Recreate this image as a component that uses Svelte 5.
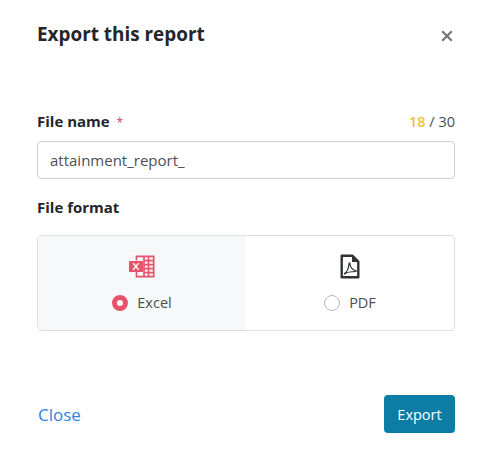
<script>
  let fileName = $state("attainment_report_");
  let format = $state("excel");
</script>

<div class="modal">
  <header>
    <h2>Export this report</h2>
    <button class="x" aria-label="Close">
      <svg width="12" height="12" viewBox="0 0 12 12"><path d="M1.200 1.200 10.800 10.800M10.800 1.200 1.200 10.800" stroke="#757575" stroke-width="2.200" fill="none"/></svg>
    </button>
  </header>

  <div class="label-row">
    <label for="fname">File name <span class="req">*</span></label>
    <span class="count"><span class="used">18</span> / 30</span>
  </div>
  <input id="fname" bind:value={fileName} />

  <div class="format-label">File format</div>
  <div class="formats">
    <button class="opt" class:active={format === "excel"} onclick={() => format = "excel"}>
      <svg class="icon" width="26" height="25" viewBox="0 0 26 25">
        <g transform="translate(0 1.500)">
          <path fill="none" stroke="#e8536b" stroke-width="1.700" d="M7.500 5V.9h17.200v20.200H7.500V16M15 .9v20.200M19.500 .9v20.200M15 5.200h9.700M15 9.200h9.700M15 13.200h9.700M15 17.200h9.700"/>
          <path fill="#e8536b" fill-rule="evenodd" d="M0 5.500h14v10.900H0zM3.400 7.800l2.500 3.100-2.700 3.300h2l1.700-2.200 1.700 2.200h2l-2.700-3.300 2.500-3.100h-2l-1.500 1.900-1.500-1.900z"/>
        </g>
      </svg>
      <span class="radio-row"><span class="radio"></span>Excel</span>
    </button>
    <button class="opt" class:active={format === "pdf"} onclick={() => format = "pdf"}>
      <svg class="icon" width="20" height="25" viewBox="0 0 20 25">
        <path fill="none" stroke="#2f3237" stroke-width="2.400" stroke-linejoin="round" d="M1.700 1.700h10.600l6 6v15.600H1.700z"/>
        <path fill="#2f3237" d="M12 1.500l6.500 6.500H12z"/>
        <path fill="none" stroke="#2f3237" stroke-width="1.200" stroke-linejoin="round" d="M4.500 19.500c2-1 4-5 4.500-9.500 0-1.500 1-1.500 1 0 0 3 2.500 6 5.500 6.500 1 0 1 1 0 1-3.500 0-8 .5-11 2.500z"/>
      </svg>
      <span class="radio-row"><span class="radio"></span>PDF</span>
    </button>
  </div>

  <footer>
    <button class="close">Close</button>
    <button class="export">Export</button>
  </footer>
</div>

<style>
  :global(body) {
    background: #fff;
    font-family: "Open Sans", "Noto Sans", sans-serif;
    color: #2b2d31;
  }
  .modal {
    padding: 21px 35px 0 37px;
    height: 454px;
    box-sizing: border-box;
  }
  header {
    display: flex;
    justify-content: space-between;
    align-items: center;
    height: 26px;
  }
  h2 {
    margin: 0;
    font-size: 18.900px;
    font-weight: 700;
    line-height: 26px;
    color: #24262a;
  }
  button {
    font-family: inherit;
    background: none;
    border: none;
    padding: 0;
    cursor: pointer;
  }
  .x {
    display: flex;
    margin: 3px 2px 0 0;
  }
  .label-row {
    display: flex;
    justify-content: space-between;
    align-items: center;
    margin-top: 64px;
    height: 20px;
    font-size: 15px;
  }
  label {
    font-weight: 700;
    color: #24262a;
  }
  .req {
    color: #d9415b;
    font-weight: 400;
    font-size: 12px;
    margin-left: 3px;
  }
  .count {
    color: #4a4d52;
    font-size: 14.500px;
  }
  .used {
    color: #f2c230;
    font-weight: 600;
  }
  input {
    display: block;
    box-sizing: border-box;
    width: 100%;
    height: 38px;
    margin-top: 10px;
    padding: 0 12px;
    border: 1px solid #cfcfcf;
    border-radius: 4px;
    font: 15px "Open Sans", "Noto Sans", sans-serif;
    color: #4c4f54;
  }
  .format-label {
    margin-top: 18px;
    font-size: 15px;
    line-height: 20px;
    font-weight: 700;
    color: #24262a;
  }
  .formats {
    display: flex;
    box-sizing: border-box;
    margin-top: 18px;
    height: 96px;
    border: 1px solid #dcdee2;
    border-radius: 4px;
    overflow: hidden;
  }
  .opt {
    flex: 1;
    display: flex;
    flex-direction: column;
    align-items: center;
    justify-content: flex-start;
    padding-top: 18px;
    font-size: 14.500px;
    color: #4a4d52;
  }
  .opt.active {
    background: #f7f8fa;
  }
  .icon {
    display: block;
  }
  .radio-row {
    display: flex;
    align-items: center;
    gap: 9px;
    margin-top: 14px;
    line-height: 20px;
  }
  .radio {
    width: 16px;
    height: 16px;
    box-sizing: border-box;
    border-radius: 50%;
    border: 1px solid #b5b7ba;
    background: #fff;
  }
  .active .radio {
    border: 5px solid #e8536b;
  }
  footer {
    display: flex;
    justify-content: space-between;
    align-items: center;
    margin-top: 64px;
  }
  .close {
    color: #2d83e0;
    font-size: 17px;
    padding-left: 1px;
  }
  .export {
    width: 71px;
    height: 38px;
    background: #0c7ea6;
    color: #fff;
    border-radius: 4px;
    font-size: 14.500px;
    font-weight: 500;
  }
</style>
